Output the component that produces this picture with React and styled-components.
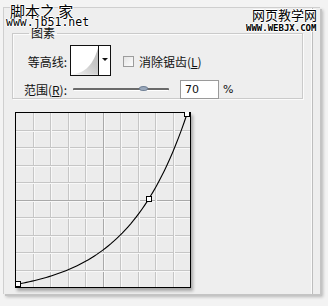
import React from 'react'
import styled, { createGlobalStyle } from 'styled-components'

const GlobalStyle = createGlobalStyle`
  html, body {
    margin: 0;
    padding: 0;
    background: #f3f3f3;
  }
  body {
    font-family: "Noto Sans CJK SC", "DejaVu Sans", sans-serif;
    font-size: 12px;
    color: #111;
  }
`

const Stage = styled.div`
  position: relative;
  width: 328px;
  height: 306px;
  overflow: hidden;
  padding: 7px 0 0 3px;
  box-sizing: border-box;
`

const Window = styled.div`
  width: 317px;
  height: 287px;
  box-sizing: border-box;
  background: #eeeeee;
  border-left: 1px solid #cfcfcf;
  border-top: 1px solid #cfcfcf;
  box-shadow: 2px 2px 0 #c4c4c4, 3px 3px 3px rgba(0, 0, 0, 0.25);
  padding-right: 7px;
`

const Panel = styled.div`
  height: 100%;
  box-sizing: border-box;
  border-right: 1px solid #bdbdbd;
  box-shadow: inset -1px 0 0 #fafafa;
  padding: 19px 9px 0 8px;
`

const Group = styled.fieldset`
  margin: 0;
  padding: 8px 0 0 0;
  height: 72px;
  box-sizing: border-box;
  border: 1px solid #cacaca;
  box-shadow: inset 1px 1px 0 #fbfbfb, 1px 1px 0 #fbfbfb;
  display: flex;
  flex-direction: column;
  gap: 4px;
`

const Legend = styled.legend`
  margin-left: 16px;
  padding: 0 2px;
  font-size: 12px;
  line-height: 12px;
`

const Row = styled.div`
  display: flex;
  align-items: center;
  height: ${p => p.$h}px;
`

const Label = styled.div`
  width: 54px;
  text-align: right;
  white-space: nowrap;
  margin-right: ${p => p.$gap}px;
`

const Preview = styled.div`
  display: flex;
  width: 41px;
  height: 31px;
  box-sizing: border-box;
  border: 1px solid #111;
  background: #fff;
  margin-top: -2px;
`

const PreviewArrow = styled.div`
  width: 11px;
  border-left: 1px solid #111;
  display: flex;
  align-items: center;
  justify-content: center;
  &::after {
    content: "";
    border-left: 3px solid transparent;
    border-right: 3px solid transparent;
    border-top: 3px solid #111;
    margin-top: -2px;
  }
`

const Check = styled.span`
  width: 11px;
  height: 11px;
  margin-left: 12px;
  border: 1px solid #9c9c9c;
  background: linear-gradient(135deg, #e4e4e4, #fdfdfd);
  box-sizing: border-box;
`

const CheckText = styled.span`
  margin-left: 5px;
  white-space: nowrap;
`

const Track = styled.div`
  position: relative;
  width: 96px;
  height: 2px;
  background: #6a6a6a;
  border-bottom: 1px solid #fff;
  border-radius: 1px;
`

const Thumb = styled.div`
  position: absolute;
  top: -2px;
  width: 9px;
  height: 5px;
  border-radius: 50%;
  background: #9aa8bb;
  border: 1px solid #6f7f94;
  box-sizing: border-box;
`

const Field = styled.div`
  width: 39px;
  height: 19px;
  margin-left: 11px;
  box-sizing: border-box;
  background: #fff;
  border: 1px solid #9a9a9a;
  padding-left: 4px;
  line-height: 17px;
  font-family: "DejaVu Sans", sans-serif;
  font-size: 11px;
`

const Unit = styled.span`
  margin-left: 4px;
  font-family: "DejaVu Sans", sans-serif;
  font-size: 11px;
`

const GraphBox = styled.div`
  width: 176px;
  height: 176px;
  margin: 13px 0 0 3px;
  box-shadow: 2px 3px 3px rgba(0, 0, 0, 0.3);
`

const Mark = styled.div`
  position: absolute;
  left: ${p => p.$x}px;
  top: ${p => p.$y}px;
  font-size: ${p => p.$size}px;
  line-height: 1;
  font-weight: ${p => (p.$bold ? 700 : 400)};
  font-family: ${p => p.$font};
  color: #000;
  white-space: nowrap;
  text-shadow: 1px 0 0 #fff, -1px 0 0 #fff, 0 1px 0 #fff, 0 -1px 0 #fff;
`

const CJK = '"Noto Sans CJK SC", sans-serif'
const MONO = '"DejaVu Sans Mono", monospace'

// exponential-ish curve through (0,0), (~0.78,0.5), (1,1)
const A = 2.8
const f = x => (Math.exp(A * x) - 1) / (Math.exp(A) - 1)
const toPx = (nx, ny) => [3 + nx * 169, 172 - ny * 170]

function curvePath() {
  let d = ''
  for (let i = 0; i <= 60; i++) {
    const nx = i / 60
    const [x, y] = toPx(nx, f(nx))
    d += (i === 0 ? 'M' : 'L') + x.toFixed(2) + ',' + y.toFixed(2) + ' '
  }
  return d
}

function Graph() {
  const lines = []
  for (let i = 1; i < 10; i++) {
    const v = Math.round(i * 17.5) + 0.5
    const c = i === 5 ? '#a9a9a9' : '#c6c6c6'
    lines.push(<line key={'v' + i} x1={v} y1={1} x2={v} y2={175} stroke={c} />)
    lines.push(<line key={'vw' + i} x1={v + 1} y1={1} x2={v + 1} y2={175} stroke="#f8f8f8" />)
    lines.push(<line key={'h' + i} x1={1} y1={v} x2={175} y2={v} stroke={c} />)
    lines.push(<line key={'hw' + i} x1={1} y1={v + 1} x2={175} y2={v + 1} stroke="#f8f8f8" />)
  }
  const mid = toPx(0.775, f(0.775))
  const handles = [toPx(0, 0), mid, toPx(1, 1)]
  return (
    <svg width="176" height="176" viewBox="0 0 176 176" style={{ display: 'block' }}>
      <rect x="0" y="0" width="176" height="176" fill="#ececec" />
      {lines}
      <rect x="0.5" y="0.5" width="175" height="175" fill="none" stroke="#000" />
      <path d={curvePath()} fill="none" stroke="#000" strokeWidth="1.1" />
      {handles.map(([x, y], i) => (
        <rect key={i} x={Math.round(x) - 2.5} y={Math.round(y) - 2.5} width="5" height="5" fill="#fff" stroke="#000" />
      ))}
    </svg>
  )
}

function ContourThumb() {
  return (
    <svg width="28" height="29" viewBox="0 0 28 29" style={{ display: 'block' }}>
      <defs>
        <linearGradient id="cg" x1="0" y1="1" x2="1" y2="0">
          <stop offset="0" stopColor="#f4f4f4" />
          <stop offset="0.6" stopColor="#c8c8c8" />
          <stop offset="1" stopColor="#bcbcbc" />
        </linearGradient>
      </defs>
      <path d="M0,29 C12,28 22,22 28,1 L28,29 Z" fill="url(#cg)" />
    </svg>
  )
}

export default function App() {
  return (
    <>
      <GlobalStyle />
      <Stage>
        <Window>
          <Panel>
            <Group>
              <Legend>图素</Legend>
              <Row $h={31}>
                <Label $gap={3}>等高线:</Label>
                <Preview>
                  <ContourThumb />
                  <PreviewArrow />
                </Preview>
                <Check />
                <CheckText>消除锯齿(<u>L</u>)</CheckText>
              </Row>
              <Row $h={19}>
                <Label $gap={6}>范围(<u>R</u>):</Label>
                <Track>
                  <Thumb style={{ left: 66 }} />
                </Track>
                <Field>70</Field>
                <Unit>%</Unit>
              </Row>
            </Group>
            <GraphBox>
              <Graph />
            </GraphBox>
          </Panel>
        </Window>
        <Mark $x={10} $y={3} $size={15} $font={CJK}>脚本之 家</Mark>
        <Mark $x={6} $y={17} $size={11.5} $font={MONO}>www.jb51.net</Mark>
        <Mark $x={252} $y={8} $size={13} $font={CJK}>网页教学网</Mark>
        <Mark $x={246} $y={24} $size={9} $bold $font={MONO}>WWW.WEBJX.COM</Mark>
      </Stage>
    </>
  )
}
